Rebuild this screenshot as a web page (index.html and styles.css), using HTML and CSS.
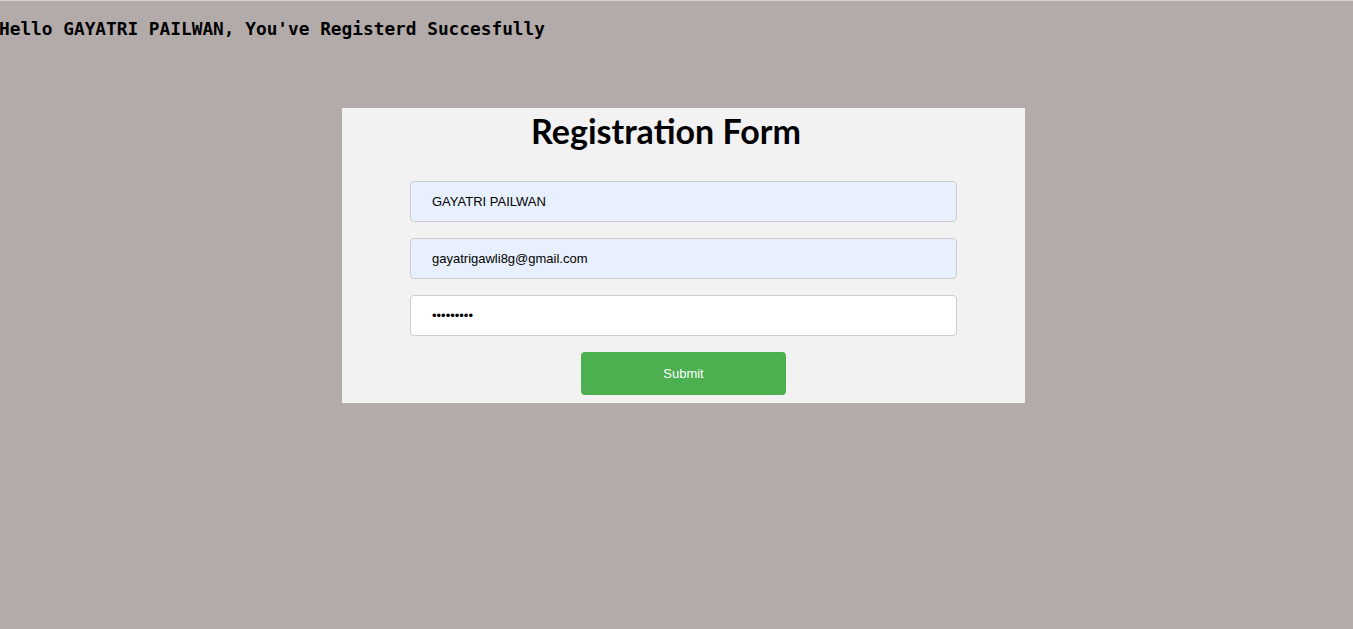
FILE: index.html
```html
<!DOCTYPE html>
<html>
<head>
<meta charset="utf-8">
<link rel="stylesheet" href="styles.css">
</head>
<body>
<div class="page">
  <h3 class="greeting">Hello GAYATRI PAILWAN, You've Registerd Succesfully</h3>
  <form class="form">
    <h1 class="title">Registration Form</h1>
    <input class="field filled" type="text" value="GAYATRI PAILWAN">
    <input class="field filled" type="email" value="gayatrigawli8g@gmail.com">
    <input class="field" type="password" value="123456789">
    <button class="submit" type="button">Submit</button>
  </form>
</div>
</body>
</html>
```
FILE: styles.css
```css
html, body {
  margin: 0;
  padding: 0;
  height: 100%;
}
body {
  background: #b3abaa;
}
.page {
  border-top: 1px solid #d6d2d1;
  min-height: 100%;
  box-sizing: border-box;
}
.greeting {
  margin: 0;
  padding-top: 16px;
  margin-left: -1px;
  font-family: "DejaVu Sans Mono", "Liberation Mono", monospace;
  font-weight: bold;
  font-size: 17.8px;
  line-height: 24px;
  color: #000;
}
.form {
  width: 683px;
  height: 295px;
  box-sizing: border-box;
  margin: 67px auto 0 342px;
  background: #f2f2f2;
  display: flex;
  flex-direction: column;
  align-items: center;
}
.title {
  margin: 0;
  padding-top: 5px;
  padding-right: 35px;
  font-family: Lato, "Open Sans", sans-serif;
  font-weight: bold;
  font-size: 34px;
  line-height: 36px;
  color: #000;
  margin-bottom: 32px;
}
.field {
  width: 547px;
  height: 41px;
  box-sizing: border-box;
  border: 1px solid #cccccc;
  border-radius: 4px;
  background: #ffffff;
  padding: 0 21px;
  font-family: "Liberation Sans", Arial, sans-serif;
  font-size: 13px;
  color: #000;
  margin: 0 0 16px 0;
  outline: none;
}
.field.filled {
  background: #e8f0fe;
}
.submit {
  width: 205px;
  height: 43px;
  border: none;
  border-radius: 4px;
  background: #4caf50;
  color: #fff;
  font-family: "Liberation Sans", Arial, sans-serif;
  font-size: 13px;
  cursor: pointer;
}
```
